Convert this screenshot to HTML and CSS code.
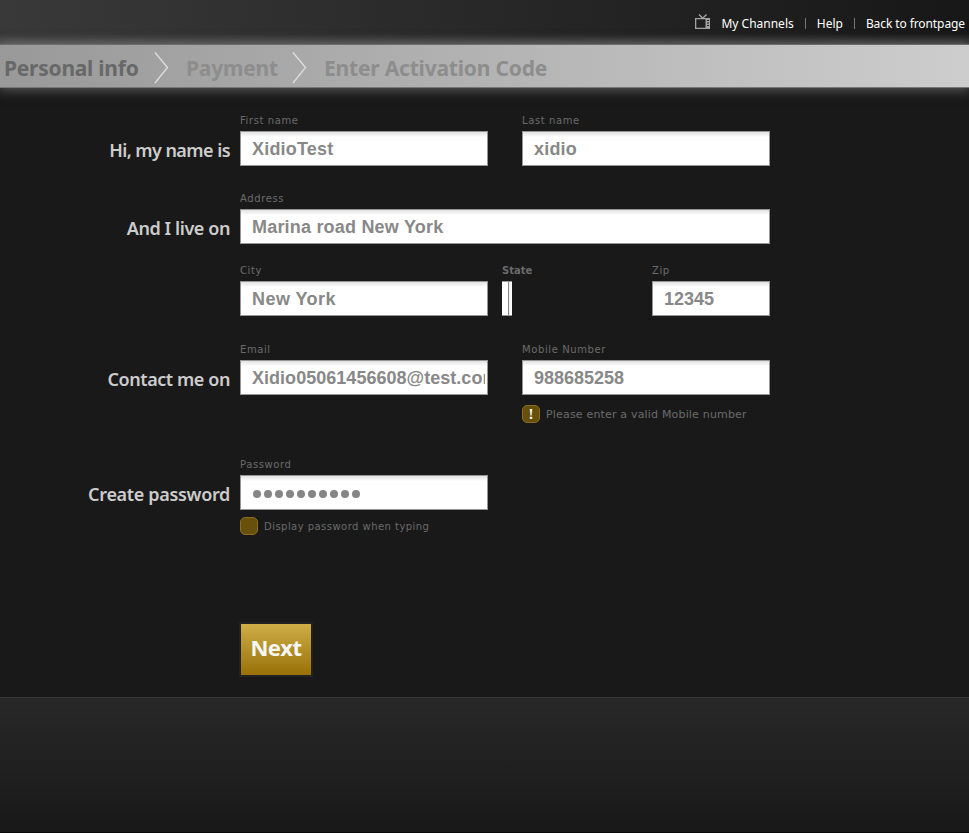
FILE: index.html
```html
<!DOCTYPE html>
<html lang="en">
<head>
<meta charset="utf-8">
<title>Personal info</title>
<link rel="stylesheet" href="styles.css">
</head>
<body>
<header class="top">
  <nav class="links">
    <svg class="tv" width="16" height="16" viewBox="0 0 16 16"><path d="M4 .5l3.500 3.500M11.500 .5l-3.500 3.500" fill="none" stroke="#aaa" stroke-width="1.300"/><path fill="#a2a2a2" fill-rule="evenodd" d="M0 4h15v11H0zM1.300 5.300v8.400h9.200V5.300zM12 6v1h2V6zm0 2.500v1h2v-1zm0 2.500v1h2v-1z"/></svg>
    <a class="channels">My Channels</a><i></i><a class="help">Help</a><i></i><a class="back">Back to frontpage</a>
  </nav>
</header>
<div class="steps">
  <span class="step current s1">Personal info</span>
  <svg class="arrow" width="15" height="32" viewBox="0 0 15 32"><path d="M1 .5L13.500 15.500 1 31" fill="none" stroke="#dcdcdc" stroke-width="1.400"/></svg>
  <span class="step s2">Payment</span>
  <svg class="arrow" width="15" height="32" viewBox="0 0 15 32"><path d="M1 .5L13.500 15.500 1 31" fill="none" stroke="#dcdcdc" stroke-width="1.400"/></svg>
  <span class="step s3">Enter Activation Code</span>
</div>
<main class="form">
  <section class="row name">
    <h2 class="h-name">Hi, my name is</h2>
    <div class="field half"><label>First name</label><div class="input">XidioTest</div></div>
    <div class="field half second"><label>Last name</label><div class="input">xidio</div></div>
  </section>
  <section class="row address">
    <h2 class="h-live">And I live on</h2>
    <div class="field full"><label>Address</label><div class="input">Marina road New York</div></div>
  </section>
  <section class="row city">
    <h2></h2>
    <div class="field half"><label>City</label><div class="input york">New York</div></div>
    <div class="field state"><label>State</label><div class="select"></div></div>
    <div class="field zip"><label>Zip</label><div class="input digits">12345</div></div>
  </section>
  <section class="row contact">
    <h2 class="h-contact">Contact me on</h2>
    <div class="field half"><label>Email</label><div class="input email"><div class="clip">Xidio05061456608@test.com</div></div></div>
    <div class="field half second"><label>Mobile Number</label><div class="input digits">988685258</div>
      <div class="note error"><b class="box">!</b><span>Please enter a valid Mobile number</span></div></div>
  </section>
  <section class="row password">
    <h2 class="h-pass">Create password</h2>
    <div class="field half"><label>Password</label><div class="input dots"><i></i><i></i><i></i><i></i><i></i><i></i><i></i><i></i><i></i><i></i></div>
      <div class="note display"><b class="box"></b><span>Display password when typing</span></div></div>
  </section>
  <button class="next"><span>Next</span></button>
</main>
<footer class="foot"></footer>
</body>
</html>
```
FILE: styles.css
```css
* { box-sizing: border-box; }
body { margin: 0; width: 969px; height: 833px; overflow: hidden; background: #191919; display: flex; flex-direction: column; font-family: "Noto Sans", sans-serif; }
.top { height: 44px; flex: none; background: linear-gradient(to bottom, transparent 34px, rgba(110,110,110,.35)), linear-gradient(to right, #393939, #171717); }
.links { height: 44px; padding: 3px 4px 0 0; display: flex; align-items: center; justify-content: flex-end; font-size: 12px; color: #fff; white-space: nowrap; }
.back { letter-spacing: -.09px; }
.tv { margin: -3px 10px 0 0; }
.links i { width: 1px; height: 11px; background: #777; margin: 0 11px; }
.steps { position: relative; height: 44px; flex: none; display: flex; align-items: center; padding: 0 0 1px 4px; border-top: 1px solid #6c6c6c; border-bottom: 1px solid #777; background: linear-gradient(to right, #999, #cdcdcd); box-shadow: 0 1px 11px 1px rgba(145,145,145,.55); white-space: nowrap; }
.step { font-size: 21px; font-weight: 700; line-height: 30px; letter-spacing: -.2px; color: #8d8d8d; padding-top: 5px; }
.current { color: #686868; letter-spacing: -.25px; }
.s1 { width: 150px; }
.s2 { width: 106px; margin-left: 17px; }
.s3 { margin-left: 17px; }
.arrow { flex: none; margin-top: 5px; }
.form { height: 609px; flex: none; padding-top: 27px; }
.row { display: flex; align-items: flex-start; }
.name { height: 78px; }
.address { height: 72px; }
.city { height: 79px; }
.contact { height: 115px; }
.password { height: 164px; }
h2 { width: 230px; margin: 23px 10px 0 0; flex: none; font-size: 18px; line-height: 24px; font-weight: 600; color: #ccc; text-align: right; white-space: nowrap; }
.h-name { letter-spacing: -.56px; }
.h-live { letter-spacing: -.42px; }
.h-contact { letter-spacing: -.42px; }
.h-pass { letter-spacing: -.33px; }
.half { width: 248px; }
.full { width: 530px; }
.second { margin-left: 34px; }
.state { width: 150px; margin-left: 14px; }
.zip { width: 118px; }
label { display: block; height: 16px; line-height: 12px; font-family: "DejaVu Sans", sans-serif; font-size: 10px; letter-spacing: .6px; color: #6b6b6b; white-space: nowrap; }
.state label { font-weight: 700; letter-spacing: 0; }
.input { height: 35px; border: 1px solid #969696; background: linear-gradient(#e1e1e1, #fff 5px); padding: 0 2px 0 11px; font: 700 18px/34px "Liberation Sans", sans-serif; letter-spacing: .2px; color: #888; white-space: nowrap; }
.york { letter-spacing: .45px; }
.email { letter-spacing: .03px; }
.clip { overflow: hidden; }
.digits { letter-spacing: 0; }
.select { width: 10px; height: 35px; border: solid #969696; border-width: 1px 0; background: linear-gradient(to right, #fff 6px, #888 6px, #888 7px, #eee 7px, #fff); }
.note { display: flex; align-items: center; gap: 6px; height: 18px; font-family: "DejaVu Sans", sans-serif; color: #6b6b6b; white-space: nowrap; }
.box { width: 18px; height: 18px; border: 1px solid #8c6c1c; border-radius: 5px; background: #66500c; color: #fff; font: 700 15px/16px "Liberation Serif", serif; text-align: center; }
.error { margin-top: 10px; font-size: 11px; letter-spacing: .18px; }
.display { margin-top: 7px; font-size: 10px; letter-spacing: .46px; }
.dots { display: flex; align-items: center; gap: 3px; padding: 2px 0 0 12px; }
.dots i { width: 8px; height: 8px; border-radius: 50%; background: #858585; }
.next { display: block; width: 74px; height: 55px; margin: -1px 0 0 239px; padding: 0 0 5px; border: 2px solid #222; background: linear-gradient(#cfae48, #987007); color: #f7f7f7; font: 700 22px/44px "Noto Sans", sans-serif; letter-spacing: -.4px; }
.foot { height: 136px; flex: none; border-top: 1px solid #383838; background: linear-gradient(#282828, #191919 130px); border-bottom: 1px solid #080808; }
```
